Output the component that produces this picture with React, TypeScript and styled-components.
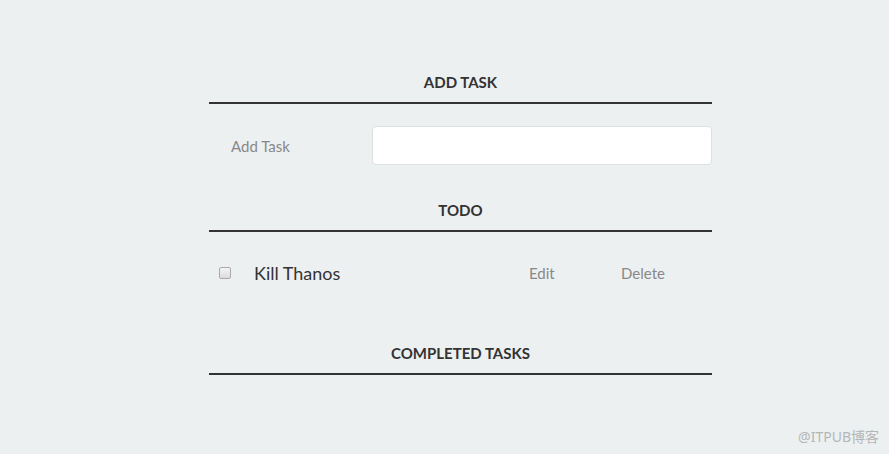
import React from "react";
import styled, { createGlobalStyle } from "styled-components";

const Global = createGlobalStyle`
  html, body { margin: 0; padding: 0; }
  body {
    background: #edf0f1;
    font-family: Lato, "Open Sans", "Noto Sans", sans-serif;
    color: #333;
    width: 889px;
    height: 454px;
    overflow: hidden;
  }
`;

const Page = styled.div`
  position: relative;
  width: 889px;
  height: 454px;
  padding-top: 73px;
  box-sizing: border-box;
`;

const Container = styled.div`
  width: 503px;
  margin-left: 209px;
  display: flex;
  flex-direction: column;
`;

const Heading = styled.h3<{ $top?: number }>`
  margin: ${(p) => p.$top ?? 0}px 0 0;
  padding: 0 0 10px;
  font-size: 15px;
  line-height: 19px;
  font-weight: 700;
  text-align: center;
  color: #333;
  border-bottom: 2px solid #333;
`;

const FormRow = styled.div`
  display: flex;
  align-items: center;
  margin-top: 22px;
`;

const Label = styled.label`
  flex: 0 0 163px;
  padding-left: 22px;
  box-sizing: border-box;
  font-size: 15px;
  color: #888;
`;

const Input = styled.input`
  flex: 1 1 auto;
  min-width: 0;
  height: 39px;
  box-sizing: border-box;
  border: 1px solid #dde0e1;
  border-radius: 4px;
  background: #fff;
  outline: none;
  font-family: inherit;
  font-size: 15px;
`;

const List = styled.ul`
  list-style: none;
  margin: 0;
  padding: 0;
`;

const Item = styled.li`
  display: flex;
  align-items: center;
  height: 42px;
  margin-top: 20px;
`;

const Check = styled.span`
  width: 10px;
  height: 10px;
  margin-left: 10px;
  border: 1px solid #aaa;
  border-radius: 2px;
  background: linear-gradient(#f4f4f4, #dcdcdc);
`;

const TaskText = styled.span`
  margin-left: 23px;
  width: 275px;
  font-size: 18px;
  color: #333;
`;

const Action = styled.button<{ $w: number }>`
  width: ${(p) => p.$w}px;
  border: none;
  background: none;
  padding: 0;
  text-align: left;
  font-family: inherit;
  font-size: 15px;
  color: #888;
`;

const Watermark = styled.div`
  position: absolute;
  right: 10px;
  bottom: 8px;
  font-family: "Noto Sans", "Noto Sans CJK SC", sans-serif;
  font-size: 14px;
  color: #b4b7b8;
`;

export default function App() {
  return (
    <Page>
      <Global />
      <Container>
        <Heading>ADD TASK</Heading>
        <FormRow>
          <Label htmlFor="new-task">Add Task</Label>
          <Input id="new-task" type="text" />
        </FormRow>
        <Heading $top={36}>TODO</Heading>
        <List>
          <Item>
            <Check />
            <TaskText>Kill Thanos</TaskText>
            <Action $w={92}>Edit</Action>
            <Action $w={60}>Delete</Action>
          </Item>
        </List>
        <Heading $top={50}>COMPLETED TASKS</Heading>
      </Container>
      <Watermark>@ITPUB博客</Watermark>
    </Page>
  );
}
